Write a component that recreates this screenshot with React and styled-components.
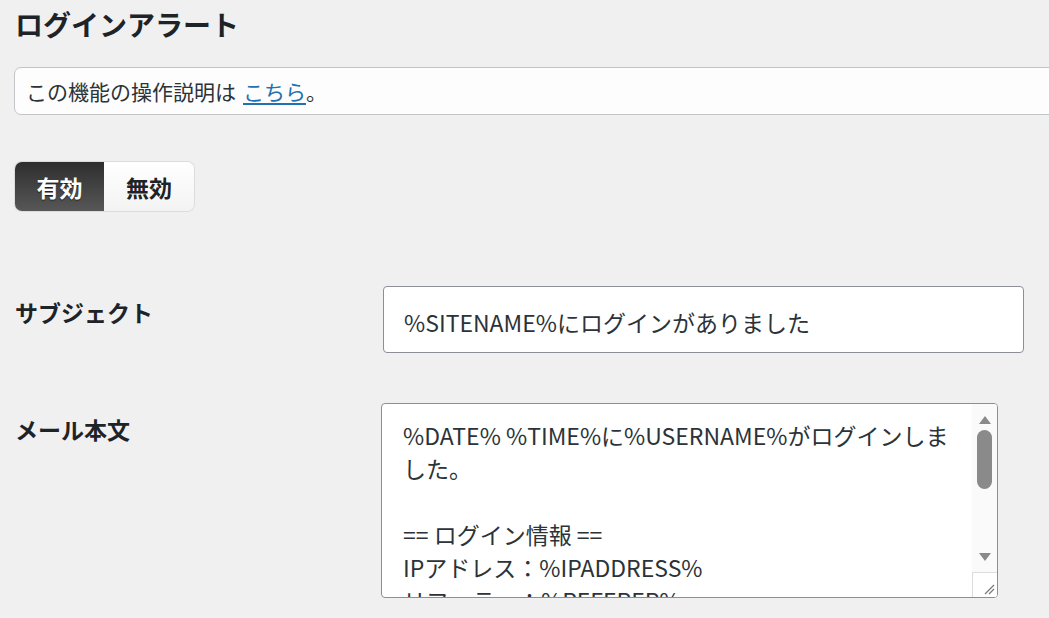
import React from 'react'
import styled, { createGlobalStyle } from 'styled-components'

const GlobalStyle = createGlobalStyle`
    html, body {
        margin: 0;
        padding: 0;
        background: #f0f0f1;
        overflow: hidden;
    }
    body {
        font-family: "Noto Sans CJK JP", "Noto Sans", sans-serif;
        color: #1d2327;
    }
`

const bodyLines = [
    '%DATE% %TIME%に%USERNAME%がログインしま',
    'した。',
    '',
    '== ログイン情報 ==',
    'IPアドレス：%IPADDRESS%',
    'リファラー：%REFERER%',
]

function App() {
    return (
        <>
            <GlobalStyle />
            <Page>
                <Title>ログインアラート</Title>
                <Notice>
                    この機能の操作説明は<a href="#">こちら</a>。
                </Notice>
                <Toggle>
                    <ToggleButton $active>有効</ToggleButton>
                    <ToggleButton>無効</ToggleButton>
                </Toggle>
                <FormTable>
                    <Label>サブジェクト</Label>
                    <Field>
                        <TextInput>%SITENAME%にログインがありました</TextInput>
                    </Field>
                    <Label>メール本文</Label>
                    <Field $shift={-2}>
                        <TextArea>
                            <TextBody>
                                {bodyLines.map((line, i) => (
                                    <Line key={i}>{line || '\u00a0'}</Line>
                                ))}
                            </TextBody>
                            <ScrollBar>
                                <Arrow $dir="up" />
                                <Thumb />
                                <Track />
                                <Arrow $dir="down" />
                                <Resizer>
                                    <svg width="12" height="12" viewBox="0 0 12 12">
                                        <path d="M2 11 L11 2 M6 11 L11 6" stroke="#777" strokeWidth="1.2" fill="none" />
                                    </svg>
                                </Resizer>
                            </ScrollBar>
                        </TextArea>
                    </Field>
                </FormTable>
            </Page>
        </>
    )
}

const Page = styled.div`
    padding: 7px 0 0 15px;
    width: 1080px;
`

const Title = styled.h1`
    margin: 0;
    font-size: 28px;
    line-height: 34px;
    font-weight: 700;
`

const Notice = styled.div`
    margin-top: 26px;
    margin-left: -1px;
    height: 48px;
    box-sizing: border-box;
    border: 1px solid #c3c4c7;
    border-radius: 7px;
    background: #fdfdfd;
    display: flex;
    align-items: center;
    padding-left: 11px;
    font-size: 21px;
    color: #2c3338;
    a{
        margin-left: 7px;
        color: #2271b1;
        text-decoration: underline;
        text-underline-offset: 3px;
    }
`

const Toggle = styled.div`
    margin-top: 47px;
    display: inline-flex;
    height: 49px;
    border-radius: 7px;
    overflow: hidden;
    box-shadow: 0 0 0 1px #dcdcde;
`

const ToggleButton = styled.div`
    width: ${p => p.$active ? '89px' : '90px'};
    display: flex;
    align-items: center;
    justify-content: center;
    font-size: 23px;
    font-weight: 700;
    color: ${p => p.$active ? '#fff' : '#1d2327'};
    background: ${p => p.$active
        ? 'linear-gradient(#2e2e2e, #575757)'
        : 'linear-gradient(#ffffff, #f3f3f3)'};
    text-shadow: ${p => p.$active ? '0 1px 1px rgba(0,0,0,0.6)' : 'none'};
`

const FormTable = styled.div`
    margin-top: 75px;
    display: grid;
    grid-template-columns: 368px 1fr;
    row-gap: 50px;
`

const Label = styled.div`
    padding-top: 11px;
    font-size: 23px;
    font-weight: 700;
    line-height: 30px;
`

const Field = styled.div`
    margin-left: ${p => p.$shift || 0}px;
`

const TextInput = styled.div`
    width: 641px;
    height: 67px;
    box-sizing: border-box;
    border: 1px solid #8c8f94;
    border-radius: 4px;
    background: #fff;
    display: flex;
    align-items: center;
    padding: 4px 0 0 20px;
    font-size: 23px;
    color: #2c3338;
`

const TextArea = styled.div`
    width: 617px;
    height: 195px;
    box-sizing: border-box;
    border: 1px solid #8c8f94;
    border-radius: 4px;
    background: #fff;
    display: flex;
    overflow: hidden;
`

const TextBody = styled.div`
    flex: 1;
    padding: 15px 0 0 21px;
    font-size: 23px;
    line-height: 33px;
    color: #2c3338;
    white-space: pre;
    overflow: hidden;
`

const Line = styled.div``

const ScrollBar = styled.div`
    width: 25px;
    background: #fafafa;
    display: flex;
    flex-direction: column;
    align-items: center;
`

const Arrow = styled.div`
    width: 0;
    height: 0;
    border-left: 6px solid transparent;
    border-right: 6px solid transparent;
    ${p => p.$dir === 'up'
        ? 'border-bottom: 8px solid #8a8a8a; margin-top: 12px;'
        : 'border-top: 8px solid #8a8a8a; margin-bottom: 11px;'}
`

const Thumb = styled.div`
    margin-top: 6px;
    width: 15px;
    height: 59px;
    border-radius: 8px;
    background: #8a8a8a;
`

const Track = styled.div`
    flex: 1;
`

const Resizer = styled.div`
    width: 25px;
    height: 25px;
    box-sizing: border-box;
    border-top: 1px solid #dcdcde;
    border-left: 1px solid #dcdcde;
    display: flex;
    align-items: flex-end;
    justify-content: flex-end;
    padding: 0 2px 2px 0;
    background: #fff;
`

export default App
